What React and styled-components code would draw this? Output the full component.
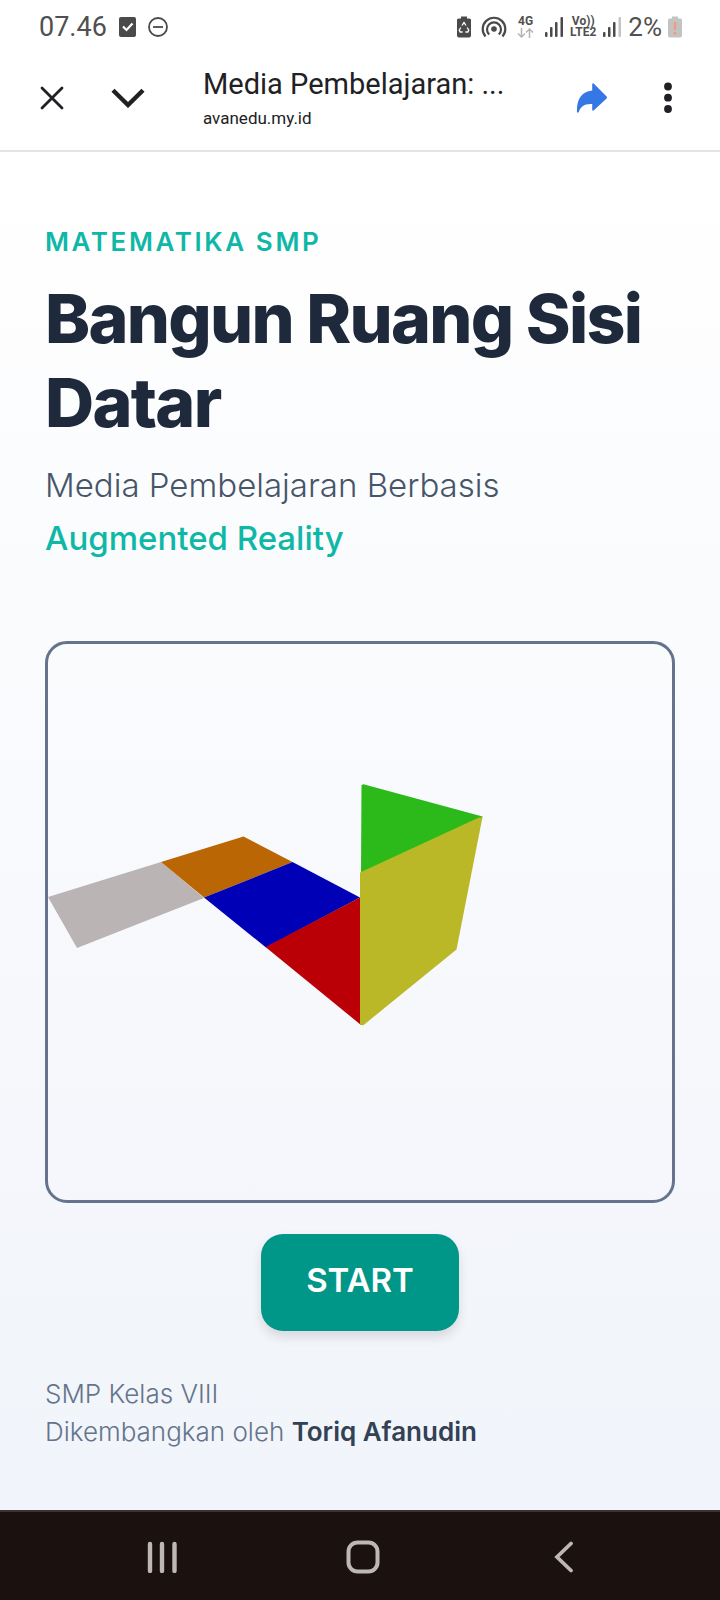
import React from "react";
import styled, { createGlobalStyle } from "styled-components";

const GlobalStyle = createGlobalStyle`
  *, *::before, *::after { box-sizing: border-box; }
  body { margin: 0; background: #fff; font-family: Inter, "Liberation Sans", sans-serif; }
  h1, p { margin: 0; }
  svg { display: block; flex: none; }
`;

const Screen = styled.div`
  min-height: 100vh;
  display: flex;
  flex-direction: column;
`;

const StatusBar = styled.div`
  display: flex;
  align-items: center;
  justify-content: space-between;
  height: 54px;
  padding: 0 38px 0 39px;
  color: #505050;
  font: 400 26px/36px Roboto, sans-serif;
`;

const StatusGroup = styled.div`
  display: flex;
  align-items: center;
  gap: ${(p) => p.$gap}px;
`;

const Clock = styled.time`
  font-size: 27px;
`;

const NetworkLabel = styled.span`
  display: flex;
  flex-direction: column;
  align-items: center;
  gap: ${(p) => p.$gap || 0}px;
  font: 700 12px/11px Roboto, sans-serif;
`;

const Toolbar = styled.header`
  display: flex;
  align-items: center;
  height: 98px;
  padding: 0 32px 8px;
  border-bottom: 2px solid #e4e4e4;
  font-family: Roboto, sans-serif;
  color: #202124;
`;

const IconButton = styled.button`
  display: grid;
  place-items: center;
  flex: none;
  width: 40px;
  height: 48px;
  margin-right: ${(p) => p.$after || 0}px;
  padding: 0;
  border: 0;
  background: none;
  color: inherit;
`;

const PageInfo = styled.div`
  flex: 1;
  min-width: 0;
  padding-top: 2px;
`;

const PageTitle = styled.p`
  font-size: 29px;
  line-height: 38px;
  white-space: nowrap;
`;

const PageHost = styled.p`
  font-size: 17px;
  line-height: 30px;
`;

const Content = styled.main`
  flex: 1;
  display: flex;
  flex-direction: column;
  padding: 71px 45px 56px;
  background: linear-gradient(#ffffff, #f1f4fa);
`;

const Eyebrow = styled.p`
  font-size: 26px;
  line-height: 38px;
  font-weight: 600;
  letter-spacing: 0.1em;
  color: #0fb8a6;
`;

const Heading = styled.h1`
  margin: 15px 0;
  font-size: 68px;
  line-height: 84px;
  font-weight: 800;
  letter-spacing: -0.025em;
  color: #1e293b;
`;

const Subtitle = styled.p`
  font-size: 33px;
  line-height: 53px;
  font-weight: 300;
  color: #475569;
`;

const Accent = styled.span`
  display: block;
  font-weight: 500;
  color: #0fb8a6;
`;

const Viewer = styled.section`
  margin-top: 76px;
  border: 3px solid #64748b;
  border-radius: 22px;
  overflow: hidden;

  svg { width: 100%; height: auto; }
`;

const StartButton = styled.button`
  align-self: center;
  margin: 31px 0 44px;
  padding: 26px 45px 30px;
  border: 0;
  border-radius: 22px;
  background: #009688;
  box-shadow: 0 6px 12px rgba(0, 0, 0, 0.12);
  color: #fff;
  font: 600 33px/41px Inter, sans-serif;
`;

const Credits = styled.footer`
  font-size: 26px;
  line-height: 38px;
  font-weight: 300;
  color: #64748b;

  strong { font-weight: 600; color: #334155; }
`;

const NavBar = styled.nav`
  display: flex;
  align-items: center;
  justify-content: space-between;
  height: 90px;
  padding: 2px 136px 0 142px;
  border-top: 2px solid #3a3230;
  background: #1b110f;
  color: #bdb7b5;
`;

const CheckIcon = () => (
  <svg width="17" height="20" viewBox="0 0 17 20">
    <rect width="17" height="20" rx="2" fill="#4a4a4a" />
    <path d="M4 9.5l3.5 3.5 6-6.5" fill="none" stroke="#fff" strokeWidth="2.2" />
  </svg>
);

const DoNotDisturbIcon = () => (
  <svg width="20" height="20" viewBox="0 0 20 20" fill="none" stroke="#4a4a4a" strokeWidth="1.8">
    <circle cx="10" cy="10" r="9" />
    <path d="M5 10h10" />
  </svg>
);

const RecycleBatteryIcon = () => (
  <svg width="14" height="22" viewBox="0 0 14 22">
    <path d="M4 0.5h6v2h2.5q1.5 0 1.5 1.5v15.5q0 2-2 2H2q-2 0-2-2V4q0-1.5 1.5-1.5H4z" fill="#4a4a4a" />
    <path d="M5 9.500l2-3 2 3M10.200 11.500l1.600 2.700-1 1.800H8.400M5.600 16H3.200l-1-1.800 1.600-2.700" fill="none" stroke="#fff" strokeWidth="1.3" />
  </svg>
);

const HotspotIcon = () => (
  <svg width="26" height="22" viewBox="0 0 26 22" fill="none" stroke="#4a4a4a" strokeWidth="2.2">
    <circle cx="13" cy="13" r="2.8" fill="#4a4a4a" stroke="none" />
    <path d="M4.500 20.500A11.300 11.300 0 1 1 21.500 20.500" />
    <path d="M8.200 18.500A7 7 0 1 1 17.800 18.500" />
  </svg>
);

const DataArrows = () => (
  <svg width="17" height="10" viewBox="0 0 17 10" fill="none" stroke="#b5b5b5" strokeWidth="1.5">
    <path d="M4.500 0v9M1 5.500l3.500 3.500L8 5.500M12.500 10V1M9 4.500L12.500 1 16 4.500" />
  </svg>
);

const SignalIcon = ({ weak }) => (
  <svg width="20" height="20" viewBox="0 0 20 20" fill="#4a4a4a">
    <rect x="1" y="15" width="2.5" height="5" rx="1" />
    <rect x="6" y="10" width="2.5" height="10" rx="1" />
    <rect x="11" y="5" width="2.5" height="15" rx="1" />
    <rect x="16.5" y="0" width="2.5" height="20" rx="1" fill={weak ? "#c4c4c4" : "#4a4a4a"} />
  </svg>
);

const LowBatteryIcon = () => (
  <svg width="14" height="22" viewBox="0 0 14 22">
    <path d="M4 0.5h6v2h2.5q1.5 0 1.5 1.5v15.5q0 2-2 2H2q-2 0-2-2V4q0-1.5 1.5-1.5H4z" fill="#c3c3c3" />
    <path d="M7 6v8M7 16v2.500" stroke="#f59a7e" strokeWidth="2.4" />
  </svg>
);

const CloseIcon = () => (
  <svg width="24" height="24" viewBox="0 0 24 24" fill="none" stroke="currentColor" strokeWidth="2.8" strokeLinecap="round">
    <path d="M2 2l20 20M22 2L2 22" />
  </svg>
);

const ChevronIcon = () => (
  <svg width="34" height="20" viewBox="0 0 34 20" fill="none" stroke="currentColor" strokeWidth="4.4">
    <path d="M2 2.200l15 14.800 15-14.800" />
  </svg>
);

const ShareIcon = () => (
  <svg width="32" height="30" viewBox="0 0 32 30" fill="#3578e5">
    <path d="M16.500 0.500q0.500-0.500 1.200 0L30.600 13.500q0.800 1 0 2L17.600 27.500q-1 0.500-1.400-0.500V21C8 20.500 4.500 24 2.800 29q-1 1.500-1.800 0C0.500 17.500 5 8.500 16.200 7.500V1.200z" />
  </svg>
);

const MoreIcon = () => (
  <svg width="8" height="32" viewBox="0 0 8 32" fill="currentColor">
    <circle cx="4" cy="4.500" r="3.9" />
    <circle cx="4" cy="15.700" r="3.9" />
    <circle cx="4" cy="27" r="3.9" />
  </svg>
);

const RecentsIcon = () => (
  <svg width="30" height="32" viewBox="0 0 30 32" stroke="currentColor" strokeWidth="4.4" strokeLinecap="round">
    <path d="M3 3v27M15 3v27M27.500 3v27" />
  </svg>
);

const HomeIcon = () => (
  <svg width="34" height="34" viewBox="0 0 34 34" fill="none" stroke="currentColor" strokeWidth="4">
    <rect x="2.5" y="2.5" width="29" height="29" rx="9" />
  </svg>
);

const BackIcon = () => (
  <svg width="20" height="32" viewBox="0 0 20 32" fill="none" stroke="currentColor" strokeWidth="3.8" strokeLinecap="round">
    <path d="M17 2.500L3 16l14 13.500" />
  </svg>
);

const UnfoldedPrism = () => (
  <svg viewBox="48 644 624 556" role="img" aria-label="Jaring-jaring kubus">
    <polygon points="48,897 161,862 204,898 77,948" fill="#bab4b4" />
    <polygon points="161,862 243.500,836.500 292.500,862 204,897.500" fill="#bb6605" />
    <polygon points="204,897.500 292.500,862 360,897.500 266,947.500" fill="#0000b6" />
    <polygon points="265.500,947 360,897.500 361,1025" fill="#ba0006" />
    <polygon points="361.500,785 363.500,784.300 482.500,816.500 482,818 361,873" fill="#2cba1b" />
    <polygon points="360,872.500 479,817.500 482.500,817 456.500,949.500 363,1025.500 360,1024.500" fill="#bab827" />
  </svg>
);

export default function App() {
  return (
    <Screen>
      <GlobalStyle />
      <StatusBar>
        <StatusGroup $gap={12}>
          <Clock>07.46</Clock>
          <CheckIcon />
          <DoNotDisturbIcon />
        </StatusGroup>
        <StatusGroup $gap={6}>
          <StatusGroup $gap={10}>
            <RecycleBatteryIcon />
            <HotspotIcon />
            <NetworkLabel $gap={1}>
              4G
              <DataArrows />
            </NetworkLabel>
            <SignalIcon />
          </StatusGroup>
          <NetworkLabel>
            <span>Vo))</span>
            <span>LTE2</span>
          </NetworkLabel>
          <SignalIcon weak />
          <span>2%</span>
          <LowBatteryIcon />
        </StatusGroup>
      </StatusBar>
      <Toolbar>
        <IconButton $after={36} aria-label="Tutup"><CloseIcon /></IconButton>
        <IconButton $after={55} aria-label="Perkecil"><ChevronIcon /></IconButton>
        <PageInfo>
          <PageTitle>Media Pembelajaran: ...</PageTitle>
          <PageHost>avanedu.my.id</PageHost>
        </PageInfo>
        <IconButton $after={36} aria-label="Bagikan"><ShareIcon /></IconButton>
        <IconButton aria-label="Menu lainnya"><MoreIcon /></IconButton>
      </Toolbar>
      <Content>
        <Eyebrow>MATEMATIKA SMP</Eyebrow>
        <Heading>Bangun Ruang Sisi Datar</Heading>
        <Subtitle>
          Media Pembelajaran Berbasis
          <Accent>Augmented Reality</Accent>
        </Subtitle>
        <Viewer><UnfoldedPrism /></Viewer>
        <StartButton type="button">START</StartButton>
        <Credits>
          <p>SMP Kelas VIII</p>
          <p>Dikembangkan oleh <strong>Toriq Afanudin</strong></p>
        </Credits>
      </Content>
      <NavBar>
        <IconButton aria-label="Terbaru"><RecentsIcon /></IconButton>
        <IconButton aria-label="Beranda"><HomeIcon /></IconButton>
        <IconButton aria-label="Kembali"><BackIcon /></IconButton>
      </NavBar>
    </Screen>
  );
}
